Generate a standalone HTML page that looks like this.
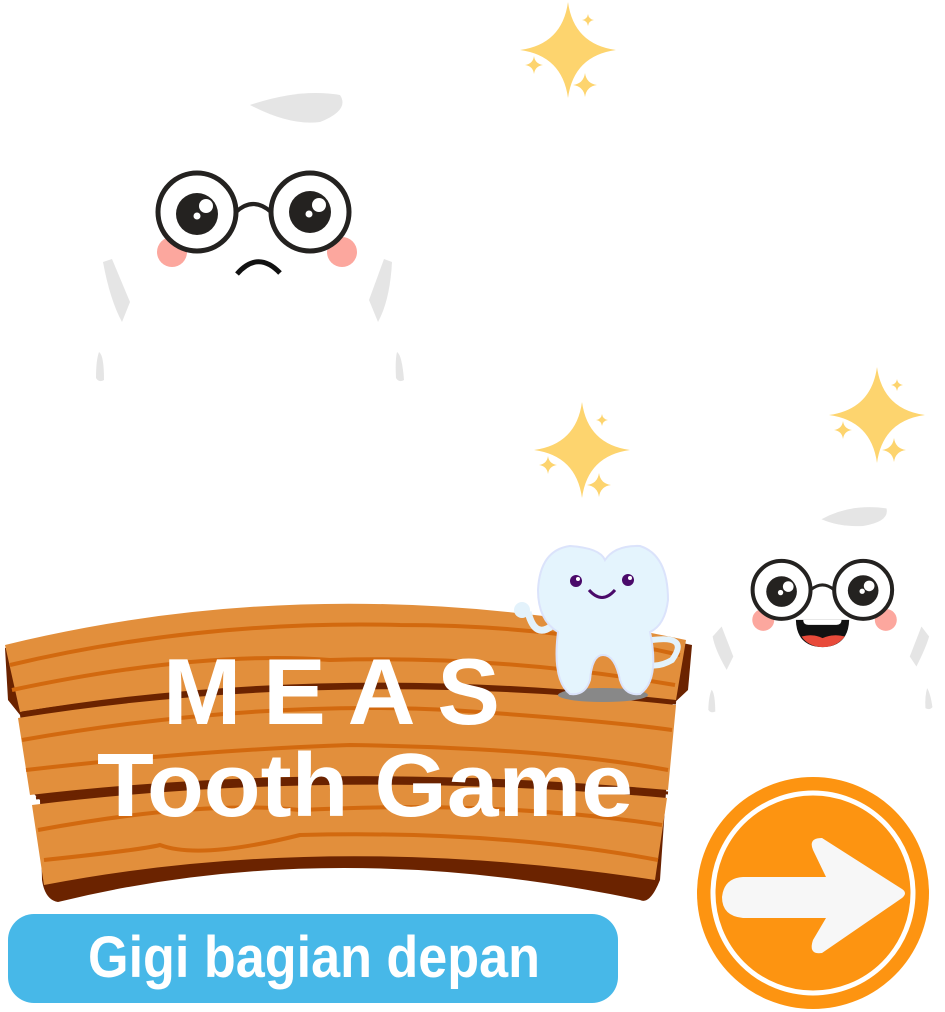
<!DOCTYPE html>
<html><head><meta charset="utf-8"><style>
html,body{margin:0;padding:0;background:#fff;width:945px;height:1012px;overflow:hidden}
svg{position:absolute;left:0;top:0}
.t{font-family:"Liberation Sans",sans-serif;font-weight:bold;fill:#fff}
</style></head><body>
<svg width="945" height="1012" viewBox="0 0 945 1012">
<defs>
<path id="st" d="M0,-1 Q0.12,-0.12 1,0 Q0.12,0.12 0,1 Q-0.12,0.12 -1,0 Q-0.12,-0.12 0,-1Z" fill="#fdd46e"/>
<g id="sp">
<use href="#st" transform="scale(48)"/>
<use href="#st" transform="translate(20,-30) scale(6)"/>
<use href="#st" transform="translate(-34,15) scale(9)"/>
<use href="#st" transform="translate(17,35) scale(12)"/>
</g>
<g id="face">
<path d="M250,105 Q300,88 340,95 Q350,110 320,122 Q290,126 250,105Z" fill="#e5e5e5"/>
<path d="M103,262 L112,259 L130,302 L122,322 Q110,300 103,262Z" fill="#e5e5e5"/>
<path d="M392,262 L384,259 L369,300 L378,322 Q390,300 392,262Z" fill="#e5e5e5"/>
<path d="M99,352 Q104,355 104,380 Q99,383 96,378 Q96,360 99,352Z" fill="#e5e5e5"/>
<path d="M397,352 Q402,355 404,380 Q399,383 396,378 Q395,360 397,352Z" fill="#e5e5e5"/>
<circle cx="172" cy="252" r="15" fill="#fca79e"/>
<circle cx="342" cy="252" r="15" fill="#fca79e"/>
<circle cx="197" cy="212" r="39" fill="#fff" stroke="#242220" stroke-width="5"/>
<circle cx="310" cy="212" r="39" fill="#fff" stroke="#242220" stroke-width="5"/>
<path d="M236,212 Q253,196 271,212" fill="none" stroke="#242220" stroke-width="4"/>
<circle cx="197" cy="214" r="21" fill="#242220"/>
<circle cx="310" cy="212" r="21" fill="#242220"/>
<circle cx="206" cy="206" r="7" fill="#fff"/><circle cx="197" cy="216" r="3.5" fill="#fff"/>
<circle cx="319" cy="205" r="7" fill="#fff"/><circle cx="309" cy="214" r="3.5" fill="#fff"/>
</g>
</defs>
<use href="#sp" transform="translate(568,50)"/>
<use href="#sp" transform="translate(582,450)"/>
<use href="#sp" transform="translate(877,415)"/>
<use href="#face"/>
<path d="M237,274 Q258,250 280,273" fill="none" stroke="#111" stroke-width="5"/>
<g transform="translate(690,490) scale(0.333)">
<path d="M395,88 Q480,40 590,55 Q600,95 520,108 Q450,112 395,88Z" fill="#e5e5e5"/>
<path d="M95,410 L130,500 L110,540 Q75,480 68,440Z" fill="#e5e5e5"/>
<path d="M695,410 L660,500 L680,530 Q710,470 718,440Z" fill="#e5e5e5"/>
<path d="M65,600 Q75,610 76,665 Q62,672 55,660 Q56,620 65,600Z" fill="#e5e5e5"/>
<path d="M712,595 Q722,610 728,652 Q720,662 707,655 Q705,620 712,595Z" fill="#e5e5e5"/>
<circle cx="220" cy="390" r="33" fill="#fca79e"/>
<circle cx="588" cy="390" r="33" fill="#fca79e"/>
<circle cx="275" cy="300" r="87" fill="#fff" stroke="#242220" stroke-width="12"/>
<circle cx="520" cy="300" r="87" fill="#fff" stroke="#242220" stroke-width="12"/>
<path d="M362,300 Q398,270 433,300" fill="none" stroke="#242220" stroke-width="9"/>
<circle cx="275" cy="305" r="46" fill="#242220"/>
<circle cx="520" cy="302" r="46" fill="#242220"/>
<circle cx="295" cy="290" r="16" fill="#fff"/><circle cx="272" cy="308" r="8" fill="#fff"/>
<circle cx="538" cy="288" r="16" fill="#fff"/><circle cx="517" cy="304" r="8" fill="#fff"/>
<path d="M318,390 L478,390 Q475,470 398,472 Q320,470 318,390Z" fill="#111"/>
<path d="M340,390 L455,390 Q455,405 440,405 L355,405 Q340,405 340,390Z" fill="#fff"/>
<path d="M335,440 Q370,430 398,445 Q430,430 465,440 Q440,472 398,472 Q355,470 335,440Z" fill="#e84a3a"/>
</g>
<path d="M5,648 Q330,568 692,645 L688,690 L672,705 L660,880 Q650,905 640,900 Q330,835 58,902 Q45,900 42,880 L40,800 L30,790 L20,715 L8,700Z" fill="#6b2300"/>
<path d="M5,645 Q330,565 686,640 L676,700 Q330,660 20,712 Z" fill="#e28f3c"/>
<path d="M18,718 Q330,668 676,705 L668,790 Q330,760 30,795Z" fill="#e28f3c"/>
<path d="M32,805 Q330,768 667,798 L655,880 Q330,830 44,885Z" fill="#e28f3c"/>
<g fill="none" stroke="#d2690f" stroke-width="4">
<path d="M10,665 Q200,620 400,625 Q550,625 680,655"/>
<path d="M12,690 Q200,650 330,660 Q500,655 675,685"/>
<path d="M22,740 Q250,700 450,710 Q600,720 672,730"/>
<path d="M26,770 Q200,750 350,745 Q550,748 668,770"/>
<path d="M38,830 Q200,800 300,810 Q500,800 662,825"/>
<path d="M44,860 Q140,850 160,845 Q200,860 300,835 Q500,830 658,860"/>
</g>
<g fill="none" stroke="#6b2300" stroke-width="3">
<path d="M22,713 Q330,665 676,703"/>
<path d="M36,798 Q330,765 668,793"/>
</g>
<text class="t" x="163" y="724" font-size="94" textLength="337" lengthAdjust="spacing">MEAS</text>
<text class="t" x="97" y="816" font-size="90" textLength="536" lengthAdjust="spacingAndGlyphs">Tooth Game</text>
<ellipse cx="603" cy="695" rx="45" ry="7" fill="#888"/>
<path d="M553,625 Q535,640 528,612" fill="none" stroke="#e3f2fb" stroke-width="7"/>
<circle cx="522" cy="610" r="8" fill="#e3f2fb"/>
<path d="M652,640 Q690,635 672,660 Q660,667 650,665" fill="none" stroke="#e3f2fb" stroke-width="6"/>
<path d="M570,546 Q600,548 605,560 Q615,545 640,546 Q668,555 668,600 Q665,625 650,632 Q660,680 640,694 Q625,696 620,680 Q615,655 603,655 Q592,655 590,680 Q585,696 570,694 Q552,680 558,632 Q538,620 538,590 Q540,550 570,546Z" fill="#e4f4fd" stroke="#dbe3fb" stroke-width="2"/>
<circle cx="576" cy="581" r="6" fill="#4a0a6a"/><circle cx="578" cy="579" r="2" fill="#fff"/>
<circle cx="628" cy="580" r="6" fill="#4a0a6a"/><circle cx="630" cy="578" r="2" fill="#fff"/>
<path d="M589,590 Q602,605 615,590" fill="none" stroke="#4a0a6a" stroke-width="3"/>
<rect x="8" y="914" width="610" height="89" rx="26" fill="#47b8e8"/>
<text class="t" x="88" y="977" font-size="58" textLength="452" lengthAdjust="spacingAndGlyphs">Gigi bagian depan</text>
<circle cx="813" cy="893" r="116" fill="#fd9411"/>
<circle cx="813" cy="893" r="100" fill="none" stroke="#fff" stroke-width="5"/>
<path d="M743,877 L826,877 L813,850 Q808,838 822,838 L902,889 Q908,893 902,898 L822,953 Q808,955 813,940 L826,918 L743,918 Q722,916 722,897 Q724,878 743,877Z" fill="#f7f7f7"/>
</svg>
</body></html>
